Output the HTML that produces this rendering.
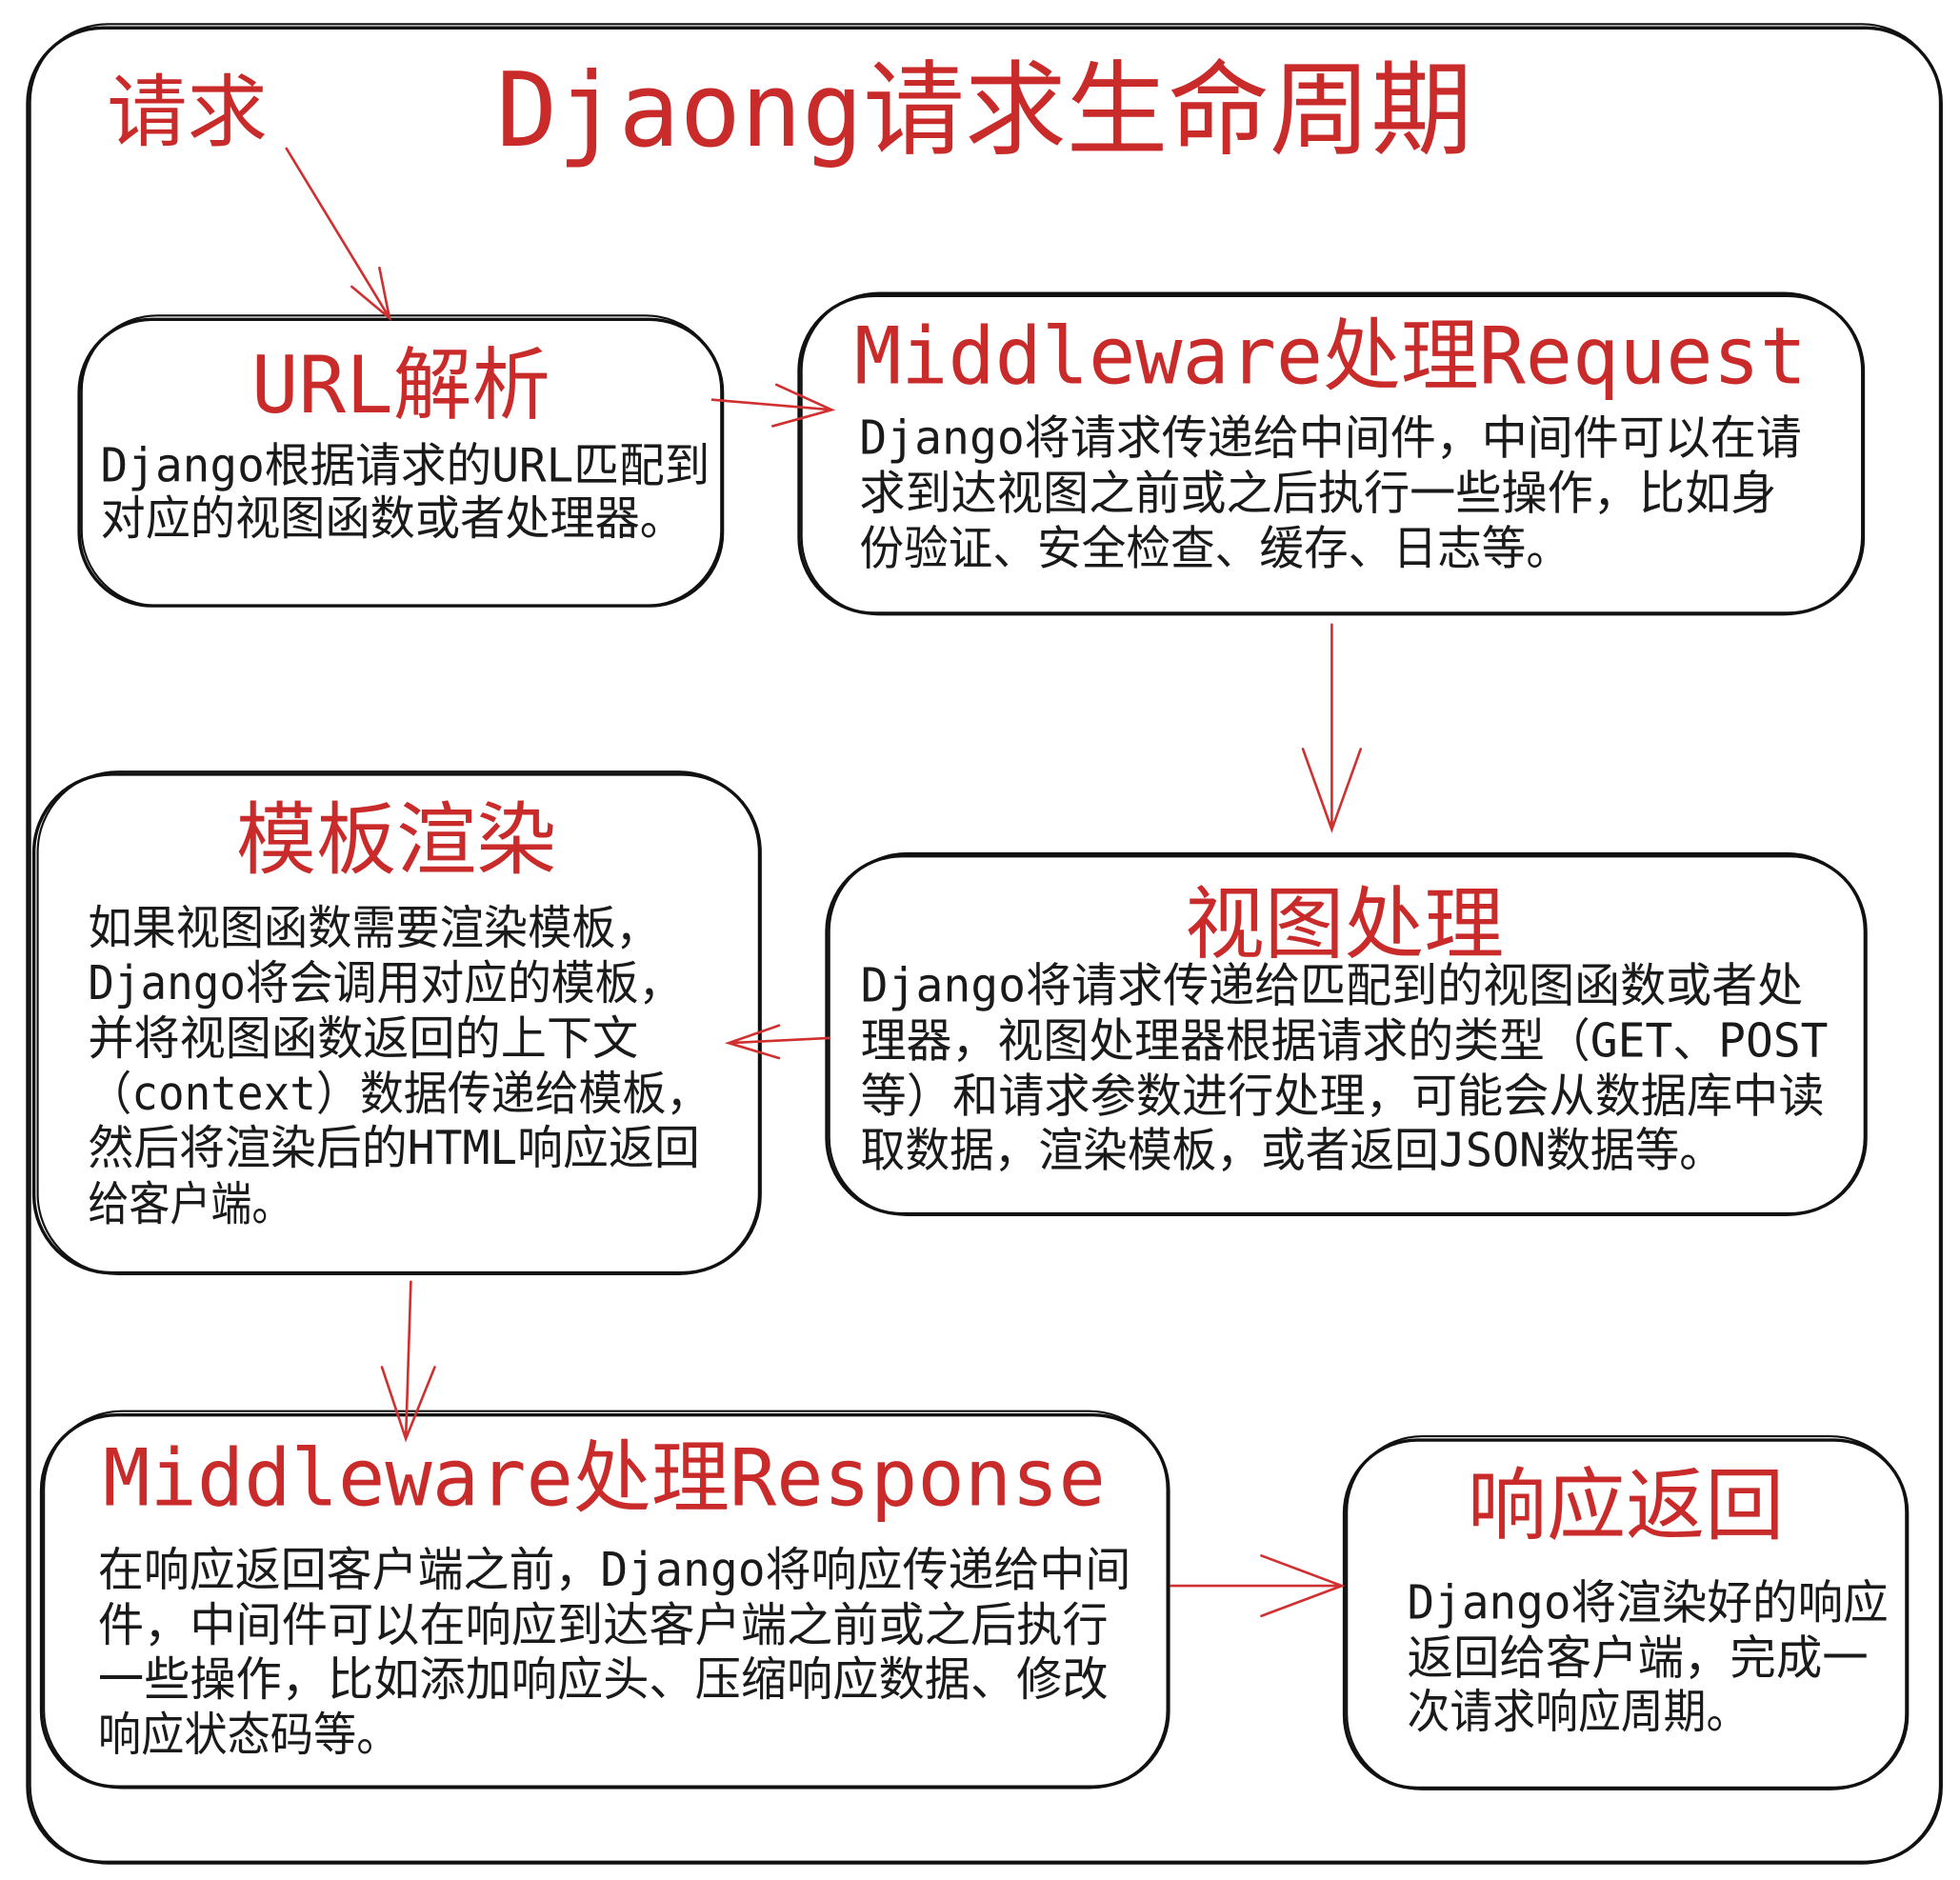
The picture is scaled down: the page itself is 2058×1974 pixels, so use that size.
<!DOCTYPE html>
<html><head><meta charset="utf-8"><style>
html,body{margin:0;padding:0;background:#fff;}
svg{display:block}
text{font-family:"DejaVu Sans Mono","Liberation Mono","Noto Sans CJK SC",monospace;}
.h{fill:#c92a2a;font-size:63px;}
.b{fill:#1a1a1a;font-size:37px;}
.box{fill:none;stroke:#111;stroke-width:2.6;}
.box2{fill:none;stroke:#111;stroke-width:1.6;}
.ar{fill:none;stroke:#d03030;stroke-width:2;stroke-linecap:round;}
</style></head><body>
<svg width="2058" height="1974" viewBox="0 0 1560 1496" xmlns="http://www.w3.org/2000/svg">
<rect x="0" y="0" width="1560" height="1496" fill="#fff"/>
<!-- outer -->
<rect class="box" x="22" y="22" width="1523" height="1460" rx="60"/>
<rect class="box2" x="24" y="19" width="1520" height="1464" rx="62"/>
<!-- boxes -->
<rect class="box" x="63" y="254" width="512" height="228" rx="58"/>
<rect class="box2" x="65" y="251" width="509" height="231" rx="60"/>
<rect class="box" x="636" y="235" width="847" height="253" rx="60"/>
<rect class="box2" x="638" y="233" width="844" height="256" rx="62"/>
<rect class="box" x="27" y="616" width="578" height="397" rx="62"/>
<rect class="box2" x="30" y="614" width="574" height="400" rx="64"/>
<rect class="box" x="658" y="681" width="827" height="285" rx="60"/>
<rect class="box2" x="660" y="679" width="824" height="288" rx="62"/>
<rect class="box" x="33" y="1126" width="897" height="296" rx="60"/>
<rect class="box2" x="35" y="1123" width="894" height="300" rx="62"/>
<rect class="box" x="1070" y="1146" width="448" height="277" rx="58"/>
<rect class="box2" x="1072" y="1143" width="445" height="281" rx="60"/>
<!-- arrows -->
<path class="ar" d="M228 118 L310 253 M280 228 L310 253 L302 213"/>
<path class="ar" d="M567 318 L662 326 M618 306 L662 326 L615 339"/>
<path class="ar" d="M1060 497 L1060 660 M1037 596 L1060 660 L1083 596"/>
<path class="ar" d="M660 826 L580 830 M620 816 L580 830 L620 842"/>
<path class="ar" d="M327 1020 L323 1145 M304 1088 L323 1145 L346 1088"/>
<path class="ar" d="M932 1262 L1068 1262 M1004 1238 L1068 1262 L1004 1286"/>
<!-- titles -->
<text class="h" x="85" y="111" font-size="64" textLength="128" lengthAdjust="spacingAndGlyphs">请求</text>
<text class="h" x="395" y="116" style="font-size:82px" textLength="777" lengthAdjust="spacingAndGlyphs">Djaong请求生命周期</text>
<!-- box1 -->
<text class="h" x="200" y="328" textLength="238" lengthAdjust="spacingAndGlyphs">URL解析</text>
<text class="b" x="80" y="383" textLength="485" lengthAdjust="spacingAndGlyphs">Django根据请求的URL匹配到</text>
<text class="b" x="80" y="425" textLength="465" lengthAdjust="spacingAndGlyphs">对应的视图函数或者处理器。</text>
<!-- box2 -->
<text class="h" x="680" y="305" textLength="758" lengthAdjust="spacingAndGlyphs">Middleware处理Request</text>
<text class="b" x="684" y="361" textLength="750" lengthAdjust="spacingAndGlyphs">Django将请求传递给中间件，中间件可以在请</text>
<text class="b" x="684" y="405" textLength="730" lengthAdjust="spacingAndGlyphs">求到达视图之前或之后执行一些操作，比如身</text>
<text class="b" x="684" y="449" textLength="566" lengthAdjust="spacingAndGlyphs">份验证、安全检查、缓存、日志等。</text>
<!-- box3 -->
<text class="h" x="188" y="690" textLength="255" lengthAdjust="spacingAndGlyphs">模板渲染</text>
<text class="b" x="70" y="751" textLength="455" lengthAdjust="spacingAndGlyphs">如果视图函数需要渲染模板，</text>
<text class="b" x="70" y="795" textLength="473" lengthAdjust="spacingAndGlyphs">Django将会调用对应的模板，</text>
<text class="b" x="70" y="839" textLength="438" lengthAdjust="spacingAndGlyphs">并将视图函数返回的上下文</text>
<text class="b" x="70" y="883" textLength="495" lengthAdjust="spacingAndGlyphs">（context）数据传递给模板，</text>
<text class="b" x="70" y="926" textLength="487" lengthAdjust="spacingAndGlyphs">然后将渲染后的HTML响应返回</text>
<text class="b" x="70" y="971" textLength="163" lengthAdjust="spacingAndGlyphs">给客户端。</text>
<!-- box4 -->
<text class="h" x="943" y="757" textLength="254" lengthAdjust="spacingAndGlyphs">视图处理</text>
<text class="b" x="685" y="797" textLength="750" lengthAdjust="spacingAndGlyphs">Django将请求传递给匹配到的视图函数或者处</text>
<text class="b" x="685" y="841" textLength="770" lengthAdjust="spacingAndGlyphs">理器，视图处理器根据请求的类型（GET、POST</text>
<text class="b" x="685" y="885" textLength="767" lengthAdjust="spacingAndGlyphs">等）和请求参数进行处理，可能会从数据库中读</text>
<text class="b" x="685" y="928" textLength="687" lengthAdjust="spacingAndGlyphs">取数据，渲染模板，或者返回JSON数据等。</text>
<!-- box5 -->
<text class="h" x="82" y="1198" textLength="798" lengthAdjust="spacingAndGlyphs">Middleware处理Response</text>
<text class="b" x="78" y="1262" textLength="822" lengthAdjust="spacingAndGlyphs">在响应返回客户端之前，Django将响应传递给中间</text>
<text class="b" x="78" y="1306" textLength="804" lengthAdjust="spacingAndGlyphs">件，中间件可以在响应到达客户端之前或之后执行</text>
<text class="b" x="78" y="1349" textLength="804" lengthAdjust="spacingAndGlyphs">一些操作，比如添加响应头、压缩响应数据、修改</text>
<text class="b" x="78" y="1393" textLength="240" lengthAdjust="spacingAndGlyphs">响应状态码等。</text>
<!-- box6 -->
<text class="h" x="1168" y="1220" textLength="252" lengthAdjust="spacingAndGlyphs">响应返回</text>
<text class="b" x="1120" y="1288" textLength="383" lengthAdjust="spacingAndGlyphs">Django将渲染好的响应</text>
<text class="b" x="1120" y="1332" textLength="367" lengthAdjust="spacingAndGlyphs">返回给客户端，完成一</text>
<text class="b" x="1120" y="1375" textLength="272" lengthAdjust="spacingAndGlyphs">次请求响应周期。</text>
</svg>
</body></html>
